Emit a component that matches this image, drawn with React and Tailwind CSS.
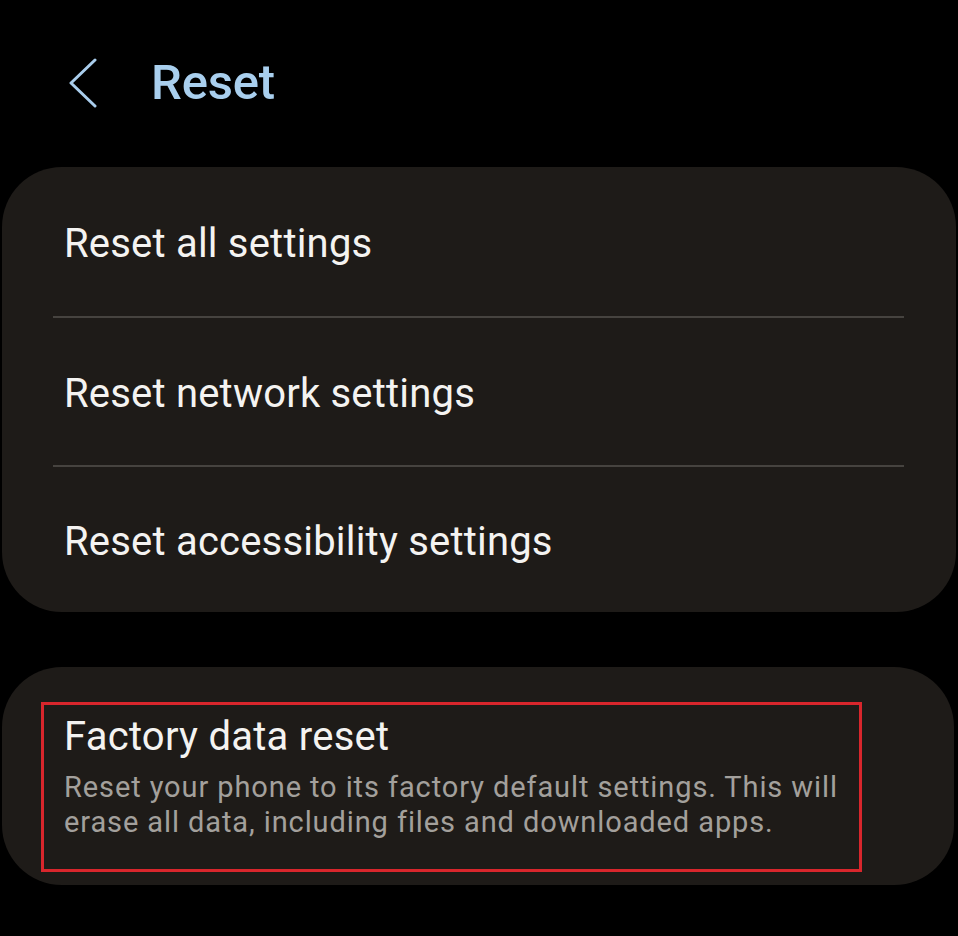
export default function App() {
  const font = { fontFamily: "Roboto, 'Noto Sans', sans-serif" };
  return (
    <div className="w-[958px] h-[936px] bg-black overflow-hidden" style={font}>
      <div className="h-[167px] flex items-start">
        <div className="h-[166px] w-full flex items-center">
          <svg className="ml-[69px]" width="28" height="50" viewBox="0 0 28 50" fill="none">
            <polyline points="26,2 2,25 26,48" stroke="#a9cdec" strokeWidth="3" strokeLinecap="round" strokeLinejoin="round" />
          </svg>
          <div className="ml-[54px] text-[49px] leading-[48px] font-medium text-[#a9cfee] tracking-[-0.2px]">Reset</div>
        </div>
      </div>
      <div className="mx-[2px] rounded-[60px] bg-[#1e1b18]">
        <div className="h-[149px] flex items-center pl-[62px] pt-[4px] text-[40px] tracking-[0.2px] text-[#f4f3f1]">Reset all settings</div>
        <div className="ml-[51px] mr-[52px] h-[2px] bg-[#46433f]"></div>
        <div className="h-[147px] flex items-center pl-[62px] pt-[4px] text-[40px] tracking-[0.2px] text-[#f4f3f1]">Reset network settings</div>
        <div className="ml-[51px] mr-[52px] h-[2px] bg-[#46433f]"></div>
        <div className="h-[145px] flex items-center pl-[62px] pt-[4px] text-[40px] tracking-[0.2px] text-[#f4f3f1]">Reset accessibility settings</div>
      </div>
      <div className="mt-[55px] mx-[2px] mr-[4px] h-[218px] rounded-[60px] bg-[#1e1b18] pt-[35px] pl-[39px]">
        <div className="w-[821px] h-[170px] border-[3px] border-[#d8262c] pl-[20px] pt-[9px]">
          <div className="text-[40px] leading-[46px] tracking-[0.25px] text-[#f4f3f1]">Factory data reset</div>
          <div className="mt-[10px] text-[29px] leading-[35px] tracking-[0.9px] text-[#a3a09c] whitespace-nowrap">
            Reset your phone to its factory default settings. This will
            <br />
            erase all data, including files and downloaded apps.
          </div>
        </div>
      </div>
    </div>
  );
}
